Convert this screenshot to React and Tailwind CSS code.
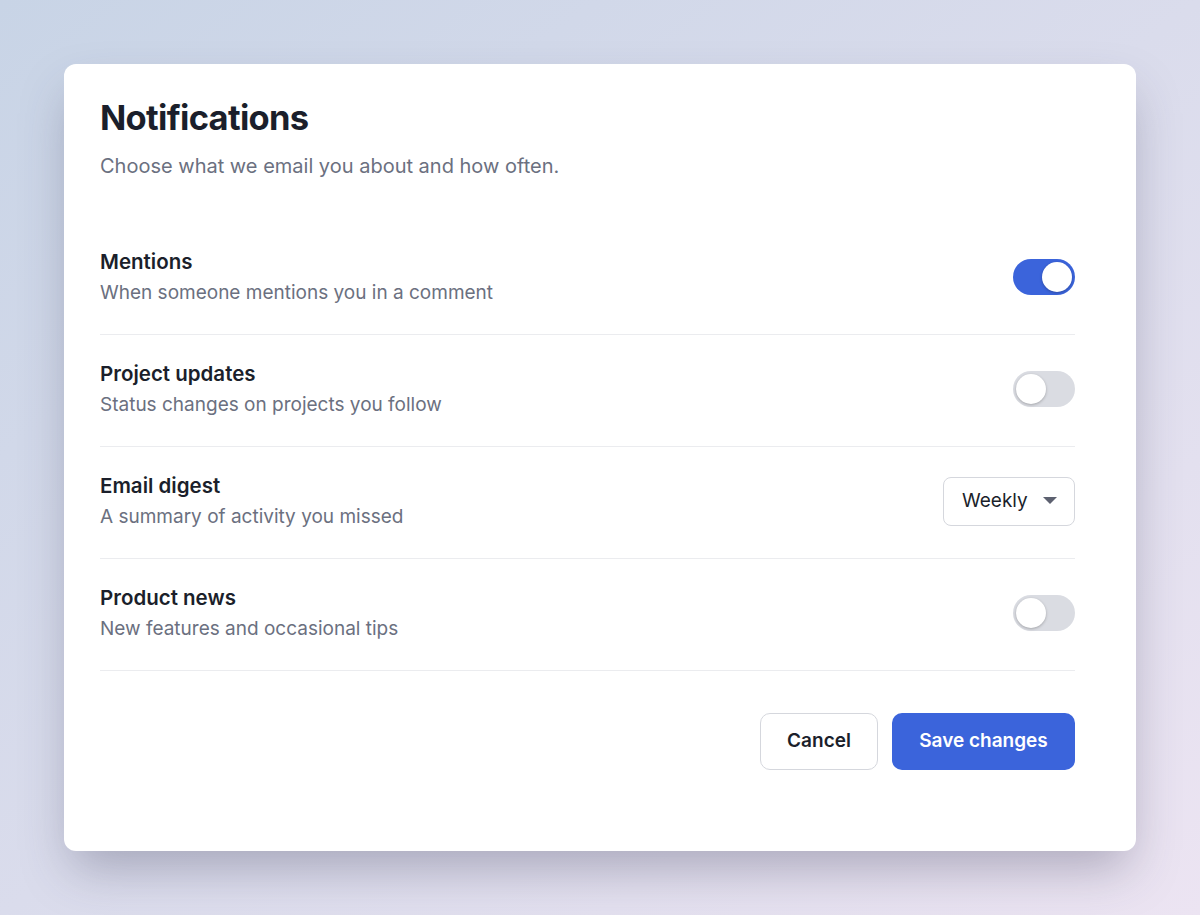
import { useState } from "react";

const ROWS = [
  { id: "mentions", title: "Mentions", sub: "When someone mentions you in a comment", kind: "toggle", on: true },
  { id: "projects", title: "Project updates", sub: "Status changes on projects you follow", kind: "toggle", on: false },
  { id: "digest", title: "Email digest", sub: "A summary of activity you missed", kind: "select" },
  { id: "news", title: "Product news", sub: "New features and occasional tips", kind: "toggle", on: false },
];

export default function App() {
  const [state, setState] = useState(
    Object.fromEntries(ROWS.map((r) => [r.id, r.on]))
  );

  return (
    <div
      className="h-[915px] p-16 bg-gradient-to-br from-[#c8d4e6] to-[#ece4f2] flex"
      style={{ fontFamily: "Inter, 'Noto Sans', sans-serif" }}
    >
      <div className="flex-1 bg-white rounded-xl shadow-[0_24px_50px_-8px_rgba(60,60,90,0.35)] pl-9 pr-[61px] pt-[30px]">
        <h1 className="text-[34.5px] leading-[48px] font-bold tracking-[-0.02em] text-[#1b1f2b]">
          Notifications
        </h1>
        <p className="mt-[11px] text-[20px] leading-[26px] text-[#6b7080]">
          Choose what we email you about and how often.
        </p>

        <div className="mt-[44px]">
          {ROWS.map((r) => (
            <div
              key={r.id}
              className="flex items-center justify-between pt-[25px] pb-[28px] border-b border-[#ebecef]"
            >
              <div>
                <div className="text-[20.5px] leading-[28px] font-semibold text-[#1b1f2b]">
                  {r.title}
                </div>
                <div className="mt-[4px] text-[19px] leading-[26px] text-[#6b7080]">
                  {r.sub}
                </div>
              </div>
              {r.kind === "toggle" ? (
                <Toggle
                  on={state[r.id]}
                  onClick={() => setState((s) => ({ ...s, [r.id]: !s[r.id] }))}
                />
              ) : (
                <button className="w-[132px] h-[49px] rounded-lg border border-[#d5d7dd] flex items-center justify-between pl-[18px] pr-[17px] text-[19px] text-[#1b1f2b]">
                  <span>Weekly</span>
                  <svg width="14" height="8" viewBox="0 0 14 8">
                    <path d="M0 0h14L7 7z" fill="#5d6170" />
                  </svg>
                </button>
              )}
            </div>
          ))}
        </div>

        <div className="flex justify-end gap-[14px] mt-[42px]">
          <button className="w-[118px] h-[57px] rounded-[10px] border border-[#d5d7dd] bg-white text-[19px] font-semibold text-[#1b1f2b]">
            Cancel
          </button>
          <button className="w-[183px] h-[57px] rounded-[10px] bg-[#3b64db] text-[19px] font-semibold text-white">
            Save changes
          </button>
        </div>
      </div>
    </div>
  );
}

function Toggle({ on, onClick }) {
  return (
    <button
      onClick={onClick}
      className={`w-[62px] h-[36px] rounded-full p-[3px] flex ${
        on ? "bg-[#3b64db] justify-end" : "bg-[#dadce2] justify-start"
      }`}
    >
      <span className="w-[30px] h-[30px] rounded-full bg-white shadow-[0_1px_3px_rgba(0,0,0,0.25)]" />
    </button>
  );
}
